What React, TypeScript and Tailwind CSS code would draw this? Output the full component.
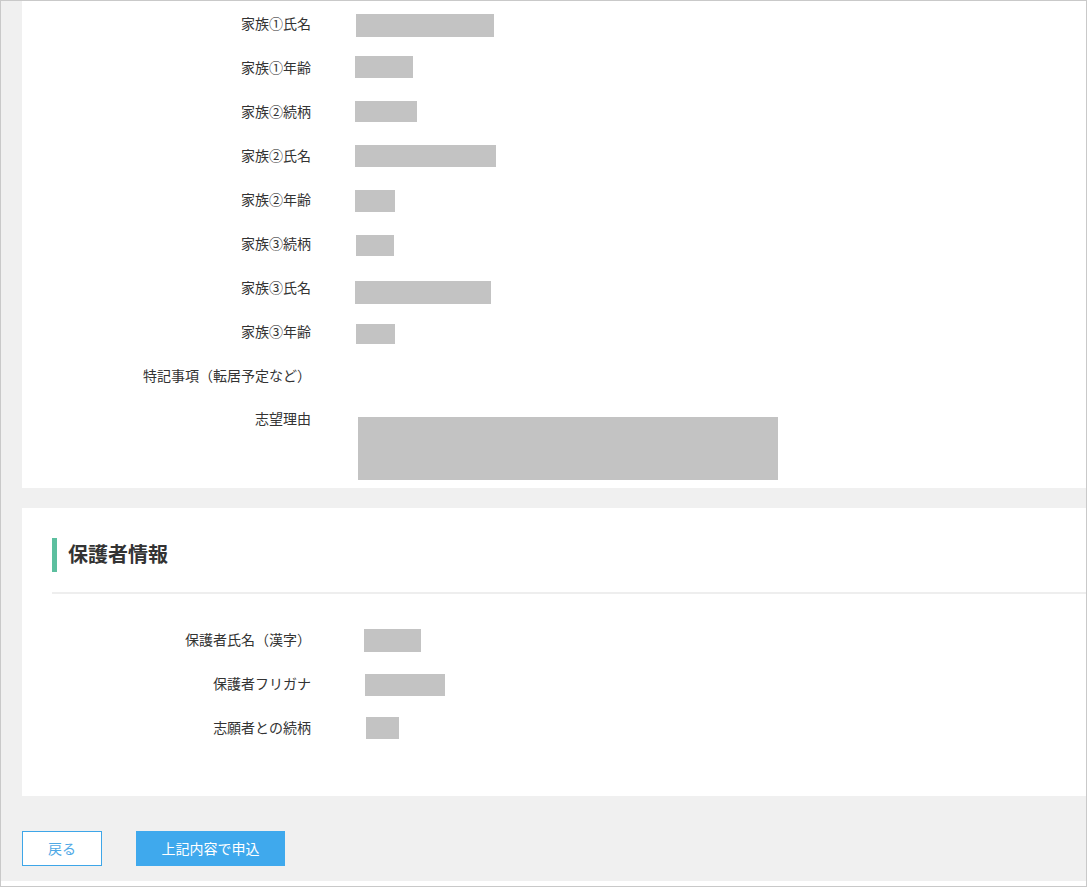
import React from "react";

const font = { fontFamily: '"Noto Sans CJK JP", "Noto Sans", sans-serif' };

type Row = { label: string; bar?: string };

const familyRows: Row[] = [
  { label: "家族①氏名", bar: "ml-[1px] mt-[12px] w-[138px] h-[23px]" },
  { label: "家族①年齢", bar: "ml-[0px] mt-[10px] w-[58px] h-[22px]" },
  { label: "家族②続柄", bar: "ml-[0px] mt-[11px] w-[62px] h-[21px]" },
  { label: "家族②氏名", bar: "ml-[0px] mt-[11px] w-[141px] h-[22px]" },
  { label: "家族②年齢", bar: "ml-[0px] mt-[12px] w-[40px] h-[22px]" },
  { label: "家族③続柄", bar: "ml-[1px] mt-[13px] w-[38px] h-[21px]" },
  { label: "家族③氏名", bar: "ml-[0px] mt-[15px] w-[136px] h-[23px]" },
  { label: "家族③年齢", bar: "ml-[1px] mt-[14px] w-[39px] h-[20px]" },
  { label: "特記事項（転居予定など）" },
];

const guardianRows: Row[] = [
  { label: "保護者氏名（漢字）", bar: "ml-[9px] mt-[11px] w-[57px] h-[23px]" },
  { label: "保護者フリガナ", bar: "ml-[10px] mt-[12px] w-[80px] h-[22px]" },
  { label: "志願者との続柄", bar: "ml-[11px] mt-[11px] w-[33px] h-[22px]" },
];

function FormRow({ row }: { row: Row }) {
  return (
    <div className="flex h-[44px] items-start">
      <div className="w-[289px] shrink-0 text-right text-[14px] leading-[22px] mt-[10px] text-[#333333]">
        {row.label}
      </div>
      <div className="ml-[44px] flex items-start">
        {row.bar && <div className={`bg-[#c3c3c3] ${row.bar}`} />}
      </div>
    </div>
  );
}

export default function App() {
  return (
    <div
      className="w-[1087px] h-[887px] border border-[#c9c9c9] bg-white flex flex-col overflow-hidden"
      style={font}
    >
      <div className="flex flex-col bg-[#f0f0f0] pl-[21px] h-[880px]">
        {/* Panel 1 */}
        <div className="bg-white h-[487px] pt-[1px] flex flex-col">
          {familyRows.map((r) => (
            <FormRow key={r.label} row={r} />
          ))}
          <div className="flex items-start">
            <div className="w-[289px] shrink-0 text-right text-[14px] leading-[22px] mt-[9px] text-[#333333]">
              志望理由
            </div>
            <div className="ml-[47px] mt-[19px] w-[420px] h-[63px] bg-[#c3c3c3]" />
          </div>
        </div>

        {/* Panel 2 */}
        <div className="bg-white mt-[20px] h-[288px] flex flex-col">
          <div className="pl-[30px] pt-[30px]">
            <div className="flex items-center h-[34px]">
              <div className="w-[5px] h-[34px] bg-[#5cbf9f]" />
              <div className="ml-[11px] text-[20px] font-bold leading-[28px] text-[#333333] -mt-[3px]">
                保護者情報
              </div>
            </div>
            <div className="mt-[20px] h-[2px] bg-[#eeeeee]" />
          </div>
          <div className="mt-[24px] flex flex-col">
            {guardianRows.map((r) => (
              <FormRow key={r.label} row={r} />
            ))}
          </div>
        </div>

        {/* Buttons */}
        <div className="flex items-start pt-[35px] gap-[34px]">
          <button className="w-[80px] h-[35px] border border-[#3ea6e8] bg-white text-[14px] text-[#4fa9e6]">
            戻る
          </button>
          <button className="w-[149px] h-[35px] bg-[#3fa9ed] text-[14px] text-white">
            上記内容で申込
          </button>
        </div>
      </div>
    </div>
  );
}
